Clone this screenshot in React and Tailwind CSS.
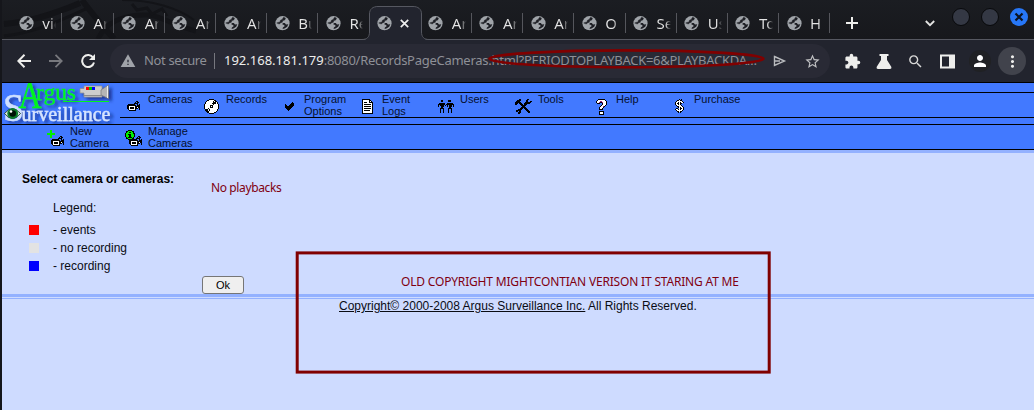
import React from "react";
import {
  MdWarning, MdStarOutline, MdExtension, MdSearch, MdPerson, MdMoreVert, MdAdd,
} from "react-icons/md";

const COLORS = { "#": "#000", w: "#fff", g: "#00f000", m: "#a0207a" };

const CAMERA = [
  ".........##..",
  "........#.##.",
  ".......####..",
  ".#######..#.#",
  "#########.###",
  "##wwwwww#####",
  "##w####w##w##",
  "##w####w###.#",
  ".#wwwwww#...#",
  "..#######....",
];
const DISC = [
  ".....#####.....",
  "...##wwwww##...",
  "..#wwwwww#w##..",
  ".#wwwwwww###w#.",
  ".#wwwwww####w#.",
  "#wwwwwwww#wwww#",
  "#wwwww###wwwww#",
  "#wwwww#w#wwwww#",
  "#wwwww###wwwww#",
  "#www#wwwwwwwww#",
  ".###w#wwwwwww#.",
  ".###w#wwwwwww#.",
  "..###wwwwwww#..",
  "...##wwwww##...",
  ".....#####.....",
];
const CHECK = [
  ".......#.",
  "......###",
  "#....####",
  "##..#####",
  "########.",
  "#######..",
  ".#####...",
  "..###....",
  "...#.....",
];
const PAGE = [
  "########...",
  "#wwwwww##..",
  "#wwwwww#w#.",
  "#w###ww####",
  "#wwwwwwwww#",
  "#w#######w#",
  "#wwwwwwwww#",
  "#w#######w#",
  "#wwwwwwwww#",
  "#w#######w#",
  "#wwwwwwwww#",
  "#w######ww#",
  "#wwwwwwwww#",
  "#wwwwwwwww#",
  "###########",
];
const USERS = [
  "...##.....###...",
  "...##.....###...",
  "................",
  ".######..######.",
  "#######.########",
  "#.####.#.#.###.#",
  "#..###...#.###.#",
  "...##......##...",
  "..####....####..",
  "..#..#....#..#..",
  "..#..#....#..#..",
  "..#..#....#..#..",
  "..#..#....#..#..",
];
const TOOLS = [
  "....##......##...",
  "..####.....##....",
  ".####......##..##",
  "######....######.",
  "###.###..######..",
  "##...###.###.....",
  "......#####......",
  ".......###.......",
  "......#####......",
  ".....###.###.....",
  "...####...###....",
  ".#####.....###...",
  ".##.##......###..",
  "...###.......##..",
  "...##............",
];
const QUESTION = [
  "..#######..",
  ".#wwwwwww#.",
  "#wwwmmwwww#",
  "#wwm##mwww#",
  ".###..#www#",
  "......#www#",
  ".....#www#.",
  "....#wwm#..",
  "...#www#...",
  "...#ww#....",
  "...####....",
  "...........",
  "...#####...",
  "...#www#...",
  "...#www#...",
  "...#####...",
];
const DOLLAR = [
  "....#.#..",
  "..##w##..",
  ".#wwwww#.",
  "#ww#w#ww#",
  "#w##w##..",
  "#ww#w#...",
  ".#wwww#..",
  "..##www#.",
  "...#w#ww#",
  ".##.w##w#",
  "#ww#w#ww#",
  ".#wwwww#.",
  "..##w##..",
  "...#.#...",
];
const PLUS = [
  "...gg...", "...gg...", "...gg...", "gggggggg", "gggggggg", "...gg...", "...gg...", "...gg...",
];
const INFO = [
  "...####...",
  ".##gggg##.",
  ".#gg##gg#.",
  "#ggggggg##",
  "#gg###ggg#",
  "#ggg##ggg#",
  "#ggg##ggg#",
  ".#g####g#.",
  ".##gggg##.",
  "...####...",
];

function Pixels({ rows, className = "" }) {
  const w = rows[0].length;
  return (
    <svg width={w} height={rows.length} viewBox={`0 0 ${w} ${rows.length}`} shapeRendering="crispEdges" className={`shrink-0 ${className}`}>
      {rows.flatMap((row, y) =>
        [...row].map((c, x) => (COLORS[c] ? <rect key={`${x}-${y}`} x={x} y={y} width="1" height="1" fill={COLORS[c]} /> : null))
      )}
    </svg>
  );
}

function Globe() {
  return (
    <svg width="15" height="15" viewBox="0 0 15 15" className="shrink-0">
      <circle cx="7.5" cy="7.2" r="7.1" fill="#a0a4a9" />
      <path d="M8.500 1.300 10.500 2 9.800 4 7.600 4.700 7.400 6.200 5.200 7 4.400 8.100 1.700 7 3 6.400 5 6 5.400 4.300 7.200 3.400Z" fill="#1d1e24" stroke="#1d1e24" strokeWidth=".4" />
      <path d="M7.800 7.100 9.800 7 11 8.400 13.300 8.200 12.200 10.800 9.500 12.500 7.600 13 7.900 11.400 9.600 10.200 9.200 9 7.400 8.400Z" fill="#1d1e24" />
    </svg>
  );
}

const TABS = ["vie", "Ar", "Ar", "Ar", "Ar", "Bu", "Re", null, "Ar", "Ar", "Ar", "O", "Se", "Us", "To", "H"];

function Tab({ label, beforeActive }) {
  if (label === null) {
    return (
      <div className="relative flex h-[34px] w-[51.2px] shrink-0 items-center self-end pl-[7.500px]">
        <svg className="absolute -left-[8px] top-0" width="67" height="34" viewBox="0 0 67 34">
          <path d="M0 34C5 34 8 31 8 26V8C8 3 11 .5 16 .5H51C56 .5 59 3 59 8V26C59 31 62 34 67 34Z" fill="#22242e" />
          <path d="M0 33.5C5 33.5 7.5 31 7.5 26V8C7.5 3 11 .5 16 .5H51C56 .5 59.5 3 59.5 8V26C59.5 31 62 33.5 67 33.5" fill="none" stroke="#565861" />
        </svg>
        <div className="relative flex items-center gap-[8px]">
          <Globe />
          <svg width="9" height="9" viewBox="0 0 9 9"><path d="M.8.8 8.200 8.200M8.200.8.8 8.200" stroke="#eeeeee" strokeWidth="1.7" /></svg>
        </div>
      </div>
    );
  }
  return (
    <div className="relative flex h-[34px] w-[51.2px] shrink-0 items-center self-end pl-[7.500px]">
      <Globe />
      <span className="ml-[8.500px] w-[14px] overflow-hidden whitespace-nowrap bg-gradient-to-r from-[#e4e4e4] from-60% to-transparent bg-clip-text text-[15px] leading-5 text-transparent">{label}</span>
      {!beforeActive && <span className="ml-auto h-[20px] w-px bg-[#55565c]" />}
    </div>
  );
}

function Dragon() {
  return (
    <svg className="absolute left-0 top-0" width="300" height="39" viewBox="0 0 300 39" fill="none" stroke="#131418">
      <path d="M2 24C28 22 52 14 78 3" strokeWidth="6" />
      <path d="M2 36C34 33 64 18 88 7" strokeWidth="3" />
      <path d="M80 0C90 14 98 23 112 39" strokeWidth="6" />
      <path d="M96 39C104 22 122 14 146 15C160 16 170 25 194 31" strokeWidth="5" />
      <path d="M130 4 135 10 145 8 150 14 160 9 165 16" strokeWidth="3" />
      <path d="M120 0C150 0 176 8 192 20" strokeWidth="2" />
    </svg>
  );
}

function TabStrip() {
  return (
    <div className="relative flex h-[40px] shrink-0 border-b border-[#565861] bg-gradient-to-b from-[#1b1d22] to-[#17181c] pl-[9.3px]">
      <Dragon />
      <div className="relative -mb-px flex">
        {TABS.map((t, i) => <Tab key={i} label={t} beforeActive={i === 6} />)}
      </div>
      <div className="relative flex flex-1 items-start">
        <svg className="ml-[16px] mt-[17px]" width="12" height="12" viewBox="0 0 12 12"><path d="M6 0V12M0 6H12" stroke="#eeeeec" strokeWidth="2" /></svg>
        <svg className="ml-auto mt-[20px]" width="10" height="7" viewBox="0 0 10 7" fill="none"><path d="M.8 1 5 5.200 9.200 1" stroke="#e4e4e2" strokeWidth="1.8" /></svg>
        <div className="ml-[17px] mt-[8px] flex gap-[11px] pr-[6px]">
          <span className="size-[18px] rounded-full border border-[#08090b] bg-[#343844]" />
          <span className="size-[18px] rounded-full border border-[#08090b] bg-[#343844]" />
          <span className="flex size-[18px] items-center justify-center rounded-full bg-[#2777f7]">
            <svg width="10" height="10" viewBox="0 0 10 10"><path d="M1.5 1.5 8.5 8.5M8.5 1.5 1.5 8.5" stroke="#0b1220" strokeWidth="2.2" /></svg>
          </span>
        </div>
      </div>
    </div>
  );
}

function Toolbar() {
  return (
    <div className="relative flex h-[42px] shrink-0 items-center bg-[#22242e] text-[#eeeeec]">
      <svg className="ml-[15px]" width="14" height="14" viewBox="0 0 14 14" fill="none" stroke="#eeeeec" strokeWidth="2"><path d="M14 7H1.500M7.500 .8 1.300 7 7.500 13.200" /></svg>
      <svg className="ml-[18px]" width="14" height="14" viewBox="0 0 14 14" fill="none" stroke="#77787d" strokeWidth="1.8"><path d="M0 7H12.500M6.500 .8 12.700 7 6.500 13.200" /></svg>
      <svg className="ml-[18px]" width="14" height="14" viewBox="0 0 14 14" fill="none" stroke="#eeeeec" strokeWidth="2"><path d="M12.200 3.700A6 6 0 1 0 13 8.500" /><path d="M14 0V6H8Z" fill="#eeeeec" stroke="none" /></svg>
      <div className="ml-[15px] flex h-[34px] w-[720px] items-center rounded-full bg-[#292a35] pl-[10px]">
        <MdWarning className="size-[16px] text-[#a0a3a9]" />
        <span className="ml-[8px] w-[70px] whitespace-nowrap text-[13px] tracking-[-0.35px] text-[#8e9097]">Not secure</span>
        <span className="h-4 w-px bg-[#77787f]" />
        <span className="ml-[9px] w-[549px] whitespace-nowrap text-[13px] tracking-[-0.27px] text-[#8e9097]"><span className="tracking-normal text-[#eeeeec]">192.168.181.179</span>:8080/RecordsPageCameras.html?PERIODTOPLAYBACK=6&amp;PLAYBACKDA…</span>
        <svg width="14" height="12" viewBox="0 0 14 12" fill="none" stroke="#b9bbbe" strokeWidth="1.4"><path d="M1.500 1.500 11.500 6 1.500 10.500V1.500ZM1.500 6H7" /></svg>
        <MdStarOutline className="ml-[17px] size-[17px] text-[#c0c1c3]" />
      </div>
      <MdExtension className="ml-[14px] size-[17px]" />
      <svg className="ml-[15px]" width="16" height="15" viewBox="0 0 16 15" fill="#eeeeec"><path d="M3.5 0H12.5V2H11V6L15.4 13Q15.8 15 14 15H2Q.2 15 .6 13L5 6V2H3.5Z" /></svg>
      <MdSearch className="ml-[15px] size-[17px] text-[#d9d9d8]" />
      <svg className="ml-[16px]" width="15" height="15" viewBox="0 0 15 15"><path d="M1 1.5H14V13.5H1Z" fill="none" stroke="#eeeeec" strokeWidth="2" /><path d="M9 1H14V14H9Z" fill="#eeeeec" /></svg>
      <span className="ml-[14px] flex size-[22px] items-center justify-center rounded-full bg-[#202124]"><MdPerson className="size-[18px] text-white" /></span>
      <span className="ml-[7px] flex size-[28px] items-center justify-center rounded-full bg-[#41434c]"><MdMoreVert className="size-[19px]" /></span>
      <svg className="absolute left-[484px] top-[7px]" width="282" height="24" viewBox="0 0 282 24"><ellipse cx="140.5" cy="11.8" rx="137" ry="8.4" fill="none" stroke="#800000" strokeWidth="2.6" /></svg>
    </div>
  );
}

function Logo() {
  return (
    <svg width="118" height="41" viewBox="2 83 118 41" className="shrink-0 font-['Liberation_Serif',serif]">
      <defs>
        <filter id="soft" x="-20%" y="-20%" width="140%" height="150%">
          <feDropShadow dx="3" dy="2.5" stdDeviation="1.6" floodColor="#0a2880" floodOpacity=".75" />
        </filter>
      </defs>
      <g filter="url(#soft)">
        <text x="3" y="120.500" fontSize="40" fill="#cfe0ff" stroke="#cfe0ff" strokeWidth=".5" textLength="21" lengthAdjust="spacingAndGlyphs">S</text>
        <text x="18.500" y="108" fontSize="37" fill="#00f51b" stroke="#00f51b" strokeWidth=".4" textLength="23" lengthAdjust="spacingAndGlyphs">A</text>
        <text x="36" y="99.800" fontSize="22.500" fill="#00f51b" stroke="#00f51b" strokeWidth=".3" textLength="40" lengthAdjust="spacingAndGlyphs">rgus</text>
        <text x="21.500" y="120.500" fontSize="20" fill="#d6e4ff" stroke="#d6e4ff" strokeWidth=".4" textLength="89" lengthAdjust="spacingAndGlyphs">urveillance</text>
        <path d="M80 88.500H84V86H102V97H84V93H80Z" fill="#cdcdcd" stroke="#8a8a8a" strokeWidth=".7" />
        <path d="M101 90 108.500 85V98.500L101 95Z" fill="#b5b5b5" stroke="#777" strokeWidth=".7" />
      </g>
      <path d="M63 101.500H109" stroke="#00f51b" />
      <path d="M4.500 113.500Q12.500 104 20.500 113.500Q12.500 123.500 4.500 113.500Z" fill="#e6f2ee" stroke="#06280f" strokeWidth=".8" />
      <circle cx="12.700" cy="113.500" r="5.400" fill="#0b7b2a" />
      <circle cx="12.700" cy="113.500" r="3.300" fill="#001206" />
      <circle cx="11" cy="111.500" r="1.300" fill="#fff" />
      <path d="M107.500 86V98" stroke="#eee" />
      <path d="M84 95.500H102" stroke="#8c8c8c" />
      <path d="M86 87H89V90H86Z" fill="#f00" /><path d="M89 87H92V90H89Z" fill="#0c0" /><path d="M92 87H95V90H92Z" fill="#00f" />
    </svg>
  );
}

function MenuItem({ icon, inset, drop, children }) {
  return (
    <div className="flex w-[78px] shrink-0 items-start">
      <span className={`w-[28px] shrink-0 ${inset} ${drop}`}><Pixels rows={icon} /></span>
      <span className="text-[11px] leading-[12px] text-[#05102e]">{children}</span>
    </div>
  );
}

function Header() {
  return (
    <div className="shrink-0 border-t border-black bg-[#4279ff]">
      <div className="flex h-[41px]">
        <Logo />
        <div className="mt-[9px] flex h-[26px] flex-1 border-y border-black">
          <MenuItem icon={CAMERA} inset="pl-[7px]" drop="pt-[8px]">Cameras</MenuItem>
          <MenuItem icon={DISC} inset="pl-[6px]" drop="pt-[6px]">Records</MenuItem>
          <MenuItem icon={CHECK} inset="pl-[9px]" drop="pt-[9px]">Program<br />Options</MenuItem>
          <MenuItem icon={PAGE} inset="pl-[8px]" drop="pt-[6px]">Event<br />Logs</MenuItem>
          <MenuItem icon={USERS} inset="pl-[6px]" drop="pt-[7px]">Users</MenuItem>
          <MenuItem icon={TOOLS} inset="pl-[5px]" drop="pt-[6px]">Tools</MenuItem>
          <MenuItem icon={QUESTION} inset="pl-[8px]" drop="pt-[6px]">Help</MenuItem>
          <MenuItem icon={DOLLAR} inset="pl-[9px]" drop="pt-[6px]">Purchase</MenuItem>
        </div>
      </div>
      <div className="flex h-[26px] border-y border-black pl-[45px] text-[11px] leading-[12px] text-[#05102e]">
        <span className="flex w-[23px] shrink-0 items-start">
          <Pixels rows={PLUS} className="mt-[5px]" />
          <Pixels rows={CAMERA} className="-ml-[4px] mt-[11px]" />
        </span>
        <span className="w-[55px]">New<br />Camera</span>
        <span className="flex w-[23px] shrink-0 items-start">
          <Pixels rows={INFO} className="mt-[5px]" />
          <Pixels rows={CAMERA} className="-ml-[6px] mt-[11px]" />
        </span>
        <span>Manage<br />Cameras</span>
      </div>
      <div className="h-[3px] bg-[#93b1ff]" />
    </div>
  );
}

function LegendRow({ color, children }) {
  return (
    <div className="flex h-[18px] items-center pl-[27px]">
      <span className={`size-[10px] ${color}`} />
      <span className="ml-[14px]">{children}</span>
    </div>
  );
}

function Content() {
  return (
    <div className="relative flex-1 bg-[#cedbff] text-[12px] leading-[14px] text-[#0a0c14]">
      <div className="flex h-[141px]">
        <div className="w-[200px] pt-[19px]">
          <div className="whitespace-nowrap pl-[20px] font-bold text-black">Select camera or cameras:</div>
          <div className="mb-[6px] mt-[15px] pl-[51px]">Legend:</div>
          <LegendRow color="bg-[#ff0000]">- events</LegendRow>
          <LegendRow color="bg-[#e3e3e3]">- no recording</LegendRow>
          <LegendRow color="bg-[#0000ff]">- recording</LegendRow>
        </div>
        <div className="flex flex-1 flex-col items-start justify-between pt-[28px]">
          <span className="ml-[9px] whitespace-nowrap font-['Noto_Sans',sans-serif] text-[12px] tracking-[-0.38px] text-[#800010]">No playbacks</span>
          <button className="h-[18px] w-[42px] rounded-[3px] border border-[#767676] bg-[#efefef] text-[11px] leading-[16px] text-black">Ok</button>
        </div>
      </div>
      <div className="h-[3px] bg-[#93b1ff]" />
      <div className="mt-px h-px bg-[#93b1ff]" />
      <div className="whitespace-nowrap pl-[337px]"><a className="underline">Copyright© 2000-2008 Argus Surveillance Inc.</a> All Rights Reserved.</div>
      <div className="absolute left-[293px] top-[98px] h-[123px] w-[477px] pl-[106px] pt-[24px]">
        <svg className="absolute left-0 top-0" width="477" height="123" viewBox="0 0 477 123">
          <rect x="2.200" y="1.900" width="472" height="119.200" fill="none" stroke="#800000" strokeWidth="3" />
        </svg>
        <span className="relative whitespace-nowrap font-['Noto_Sans',sans-serif] text-[12px] tracking-[-0.18px] text-[#800010]">OLD COPYRIGHT MIGHTCONTIAN VERISON IT STARING AT ME</span>
      </div>
    </div>
  );
}

export default function App() {
  return (
    <div className="flex h-[410px] w-[1034px] overflow-hidden bg-[#15161b] pl-[2px]">
      <div className="flex min-w-0 flex-1 flex-col">
        <div className="font-['Noto_Sans',sans-serif]">
          <TabStrip />
          <Toolbar />
        </div>
        <div className="flex flex-1 flex-col font-['Liberation_Sans',Arial,sans-serif]">
          <Header />
          <Content />
        </div>
      </div>
    </div>
  );
}
